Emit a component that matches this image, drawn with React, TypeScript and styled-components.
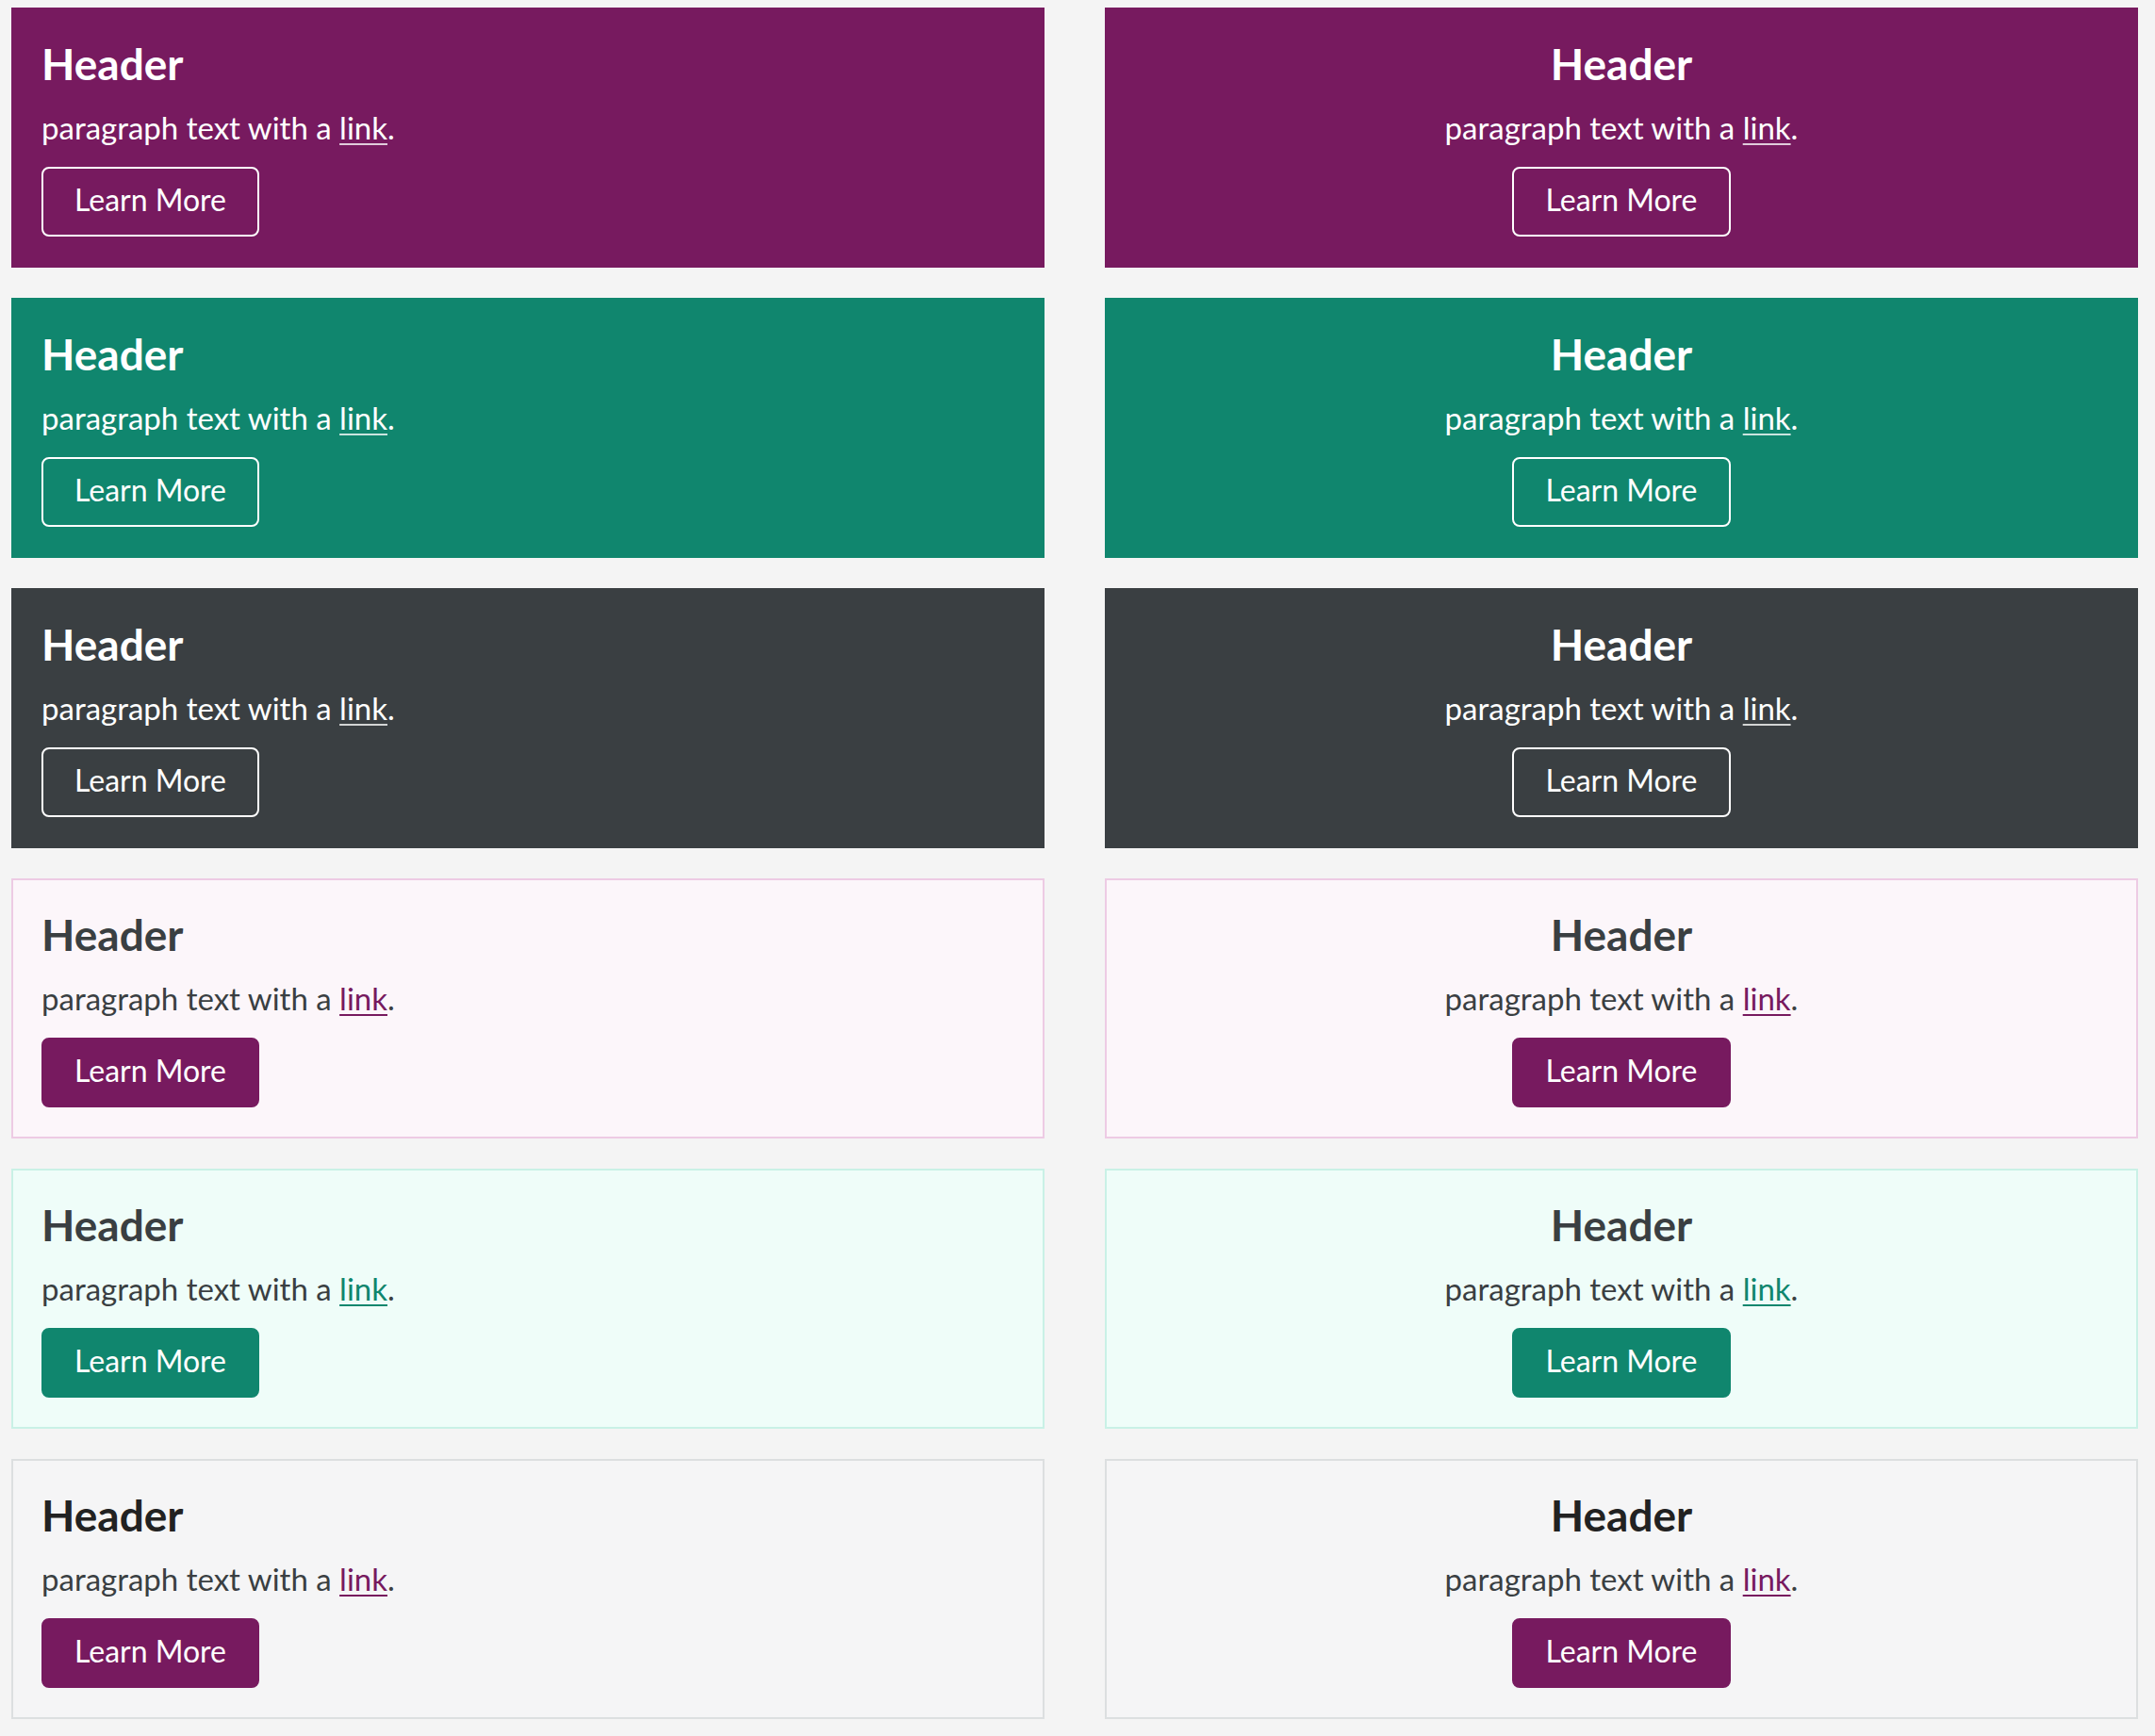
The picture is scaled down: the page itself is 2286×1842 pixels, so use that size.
import React from "react";
import styled, { createGlobalStyle, css } from "styled-components";

const GlobalStyle = createGlobalStyle`
  * { box-sizing: border-box; }
  html, body { margin: 0; padding: 0; background: #f4f4f4; }
  body { font-family: "Lato", "Noto Sans", sans-serif; }
`;

type Variant = "purple" | "teal" | "dark" | "pink" | "mint" | "gray";

interface Theme {
  bg: string;
  border: string;
  header: string;
  text: string;
  link: string;
  underline: string;
  btnBg: string;
  btnBorder: string;
}

const themes: Record<Variant, Theme> = {
  purple: {
    bg: "#771a5f",
    border: "#771a5f",
    header: "#ffffff",
    text: "#ffffff",
    link: "#ffffff",
    underline: "rgba(255,255,255,0.78)",
    btnBg: "transparent",
    btnBorder: "#ffffff",
  },
  teal: {
    bg: "#10866e",
    border: "#10866e",
    header: "#ffffff",
    text: "#ffffff",
    link: "#ffffff",
    underline: "rgba(255,255,255,0.78)",
    btnBg: "transparent",
    btnBorder: "#ffffff",
  },
  dark: {
    bg: "#3a3f42",
    border: "#3a3f42",
    header: "#ffffff",
    text: "#ffffff",
    link: "#ffffff",
    underline: "rgba(255,255,255,0.78)",
    btnBg: "transparent",
    btnBorder: "#ffffff",
  },
  pink: {
    bg: "#fcf6fa",
    border: "#edcbe4",
    header: "#3a3f42",
    text: "#3a3f42",
    link: "#771a5f",
    underline: "#771a5f",
    btnBg: "#771a5f",
    btnBorder: "#771a5f",
  },
  mint: {
    bg: "#effdf9",
    border: "#c9f1e6",
    header: "#3a3f42",
    text: "#3a3f42",
    link: "#10866e",
    underline: "#10866e",
    btnBg: "#10866e",
    btnBorder: "#10866e",
  },
  gray: {
    bg: "#f5f5f6",
    border: "#dcdfe0",
    header: "#222222",
    text: "#3a3f42",
    link: "#771a5f",
    underline: "#771a5f",
    btnBg: "#771a5f",
    btnBorder: "#771a5f",
  },
};

const Page = styled.main`
  display: grid;
  grid-template-columns: 1096px 1096px;
  column-gap: 64px;
  row-gap: 32px;
  padding: 8px 18px 18px 12px;
`;

const Card = styled.section<{ $v: Variant; $center?: boolean }>`
  display: flex;
  flex-direction: column;
  align-items: ${(p) => (p.$center ? "center" : "flex-start")};
  text-align: ${(p) => (p.$center ? "center" : "left")};
  height: 276px;
  padding: 30px 30px 0 30px;
  background: ${(p) => themes[p.$v].bg};
  border: 2px solid ${(p) => themes[p.$v].border};
`;

const Header = styled.h2<{ $v: Variant }>`
  margin: 0;
  font-family: "Lato", sans-serif;
  font-weight: 700;
  font-size: 46px;
  line-height: 56px;
  color: ${(p) => themes[p.$v].header};
`;

const Paragraph = styled.p<{ $v: Variant }>`
  margin: 17px 0 0 0;
  font-size: 33px;
  line-height: 44px;
  font-weight: 400;
  color: ${(p) => themes[p.$v].text};
`;

const Link = styled.a<{ $v: Variant }>`
  color: ${(p) => themes[p.$v].link};
  text-decoration: underline;
  text-decoration-color: ${(p) => themes[p.$v].underline};
  text-decoration-thickness: 2px;
  text-underline-offset: 4px;
`;

const Button = styled.a<{ $v: Variant }>`
  display: inline-block;
  margin-top: 20px;
  height: 74px;
  padding: 0 33px 4px 33px;
  line-height: 66px;
  font-size: 32px;
  font-weight: 400;
  color: #ffffff;
  text-decoration: none;
  border-radius: 8px;
  ${(p) => css`
    background: ${themes[p.$v].btnBg};
    border: 2px solid ${themes[p.$v].btnBorder};
  `}
`;

const variants: Variant[] = ["purple", "teal", "dark", "pink", "mint", "gray"];

const Promo: React.FC<{ v: Variant; center?: boolean }> = ({ v, center }) => (
  <Card $v={v} $center={center}>
    <Header $v={v}>Header</Header>
    <Paragraph $v={v}>
      paragraph text with a <Link $v={v} href="#">link</Link>.
    </Paragraph>
    <Button $v={v} href="#">Learn More</Button>
  </Card>
);

export default function App() {
  return (
    <>
      <GlobalStyle />
      <Page>
        {variants.map((v) => (
          <React.Fragment key={v}>
            <Promo v={v} />
            <Promo v={v} center />
          </React.Fragment>
        ))}
      </Page>
    </>
  );
}
